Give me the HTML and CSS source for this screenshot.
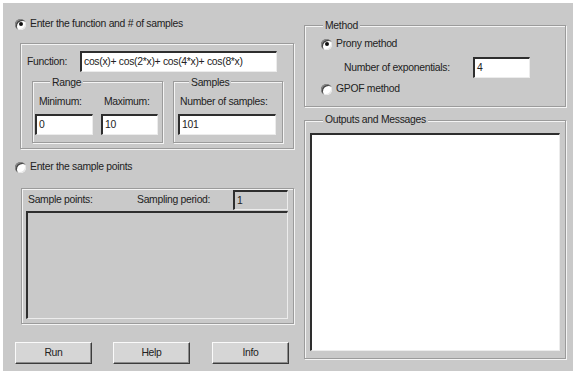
FILE: index.html
```html
<!DOCTYPE html>
<html>
<head>
<meta charset="utf-8">
<link rel="stylesheet" href="styles.css">
</head>
<body>
<div class="window">
  <div class="col-left">
    <div class="radio-row r1"><span class="radio on"></span><span>Enter the function and # of samples</span></div>
    <div class="frame f-func">
      <div class="func-row"><span class="func-label">Function:</span><span class="field func-field">cos(x)+ cos(2*x)+ cos(4*x)+ cos(8*x)</span></div>
      <div class="sub-row">
        <div class="frame range">
          <div class="title range-title">Range</div>
          <div class="range-cols">
            <div class="rcol rcol-min"><div class="lbl lbl-min">Minimum:</div><div class="field">0</div></div>
            <div class="rcol rcol-max"><div class="lbl lbl-max">Maximum:</div><div class="field">10</div></div>
          </div>
        </div>
        <div class="frame samples">
          <div class="title samples-title">Samples</div>
          <div class="lbl lbl-samples">Number of samples:</div>
          <div class="field samples-field">101</div>
        </div>
      </div>
    </div>
    <div class="radio-row r2"><span class="radio"></span><span>Enter the sample points</span></div>
    <div class="frame f-points">
      <div class="sp-row">
        <span class="sp-l1">Sample points:</span>
        <span class="sp-l2">Sampling period:</span>
        <span class="field sp-field">1</span>
      </div>
      <div class="field sp-list"></div>
    </div>
    <div class="buttons">
      <div class="btn">Run</div>
      <div class="btn">Help</div>
      <div class="btn btn-info">Info</div>
    </div>
  </div>
  <div class="col-right">
    <div class="frame method">
      <div class="title method-title">Method</div>
      <div class="radio-row m-row m-prony"><span class="radio on"></span><span>Prony method</span></div>
      <div class="num-row"><span class="num-label">Number of exponentials:</span><span class="field num-field">4</span></div>
      <div class="radio-row m-row m-gpof"><span class="radio"></span><span>GPOF method</span></div>
    </div>
    <div class="frame outputs">
      <div class="title out-title">Outputs and Messages</div>
      <div class="field out-list"></div>
    </div>
  </div>
</div>
</body>
</html>
```
FILE: styles.css
```css
* { box-sizing: border-box; }
html, body { margin: 0; padding: 0; background: #ffffff; }
body {
  font-family: "Liberation Sans", Arial, sans-serif;
  font-size: 10.4px;
  letter-spacing: -0.3px;
  color: #222222;
  line-height: 12px;
}
.window {
  margin: 3px 0 0 3px;
  width: 570px;
  height: 368px;
  background: #c9c9c9;
  display: flex;
  align-items: flex-start;
}
.col-left {
  width: 296px;
  display: flex;
  flex-direction: column;
  align-items: flex-start;
}
.col-right {
  margin-left: 5px;
  display: flex;
  flex-direction: column;
  align-items: flex-start;
}
.frame {
  border: 1px solid #9b9b9b;
  box-shadow: inset 1px 1px 0 #f4f4f4, 1px 1px 0 #f4f4f4;
  display: flex;
  flex-direction: column;
  align-items: flex-start;
}
.title {
  background: #c9c9c9;
  padding: 0 2px;
  height: 12px;
  line-height: 12px;
  white-space: nowrap;
}
.radio-row {
  display: flex;
  align-items: center;
  height: 14px;
  gap: 4px;
  white-space: nowrap;
}
.radio {
  width: 11px;
  height: 11px;
  border-radius: 50%;
  background: #ffffff;
  box-shadow: inset 1px 1px 0 #8a8a8a, inset 2px 2px 0 #444444, inset -1px -1px 0 #e6e6e6;
  display: flex;
  align-items: center;
  justify-content: center;
  flex: none;
}
.radio.on::after {
  content: "";
  width: 4px;
  height: 4px;
  border-radius: 50%;
  background: #111111;
}
.field {
  background: #ffffff;
  border-style: solid;
  border-width: 2px 1px 1px 2px;
  border-color: #2e2e2e #ececec #ececec #2e2e2e;
  height: 21px;
  display: flex;
  align-items: center;
  padding-left: 2px;
  white-space: nowrap;
}
.r1 { margin: 14px 0 0 12px; }
.f-func {
  margin: 12px 0 0 17px;
  width: 274px;
  height: 106px;
  padding: 7px 0 0 6px;
}
.func-row { display: flex; align-items: center; height: 21px; }
.func-label { width: 53px; }
.func-field { width: 197px; }
.sub-row { display: flex; margin: 9px 0 0 5px; }
.range { width: 131px; height: 62px; padding-left: 2px; }
.range-title { margin: -5px 0 0 15px; }
.range-cols { display: flex; gap: 8px; margin-top: 7px; }
.rcol { display: flex; flex-direction: column; }
.rcol-min { width: 58px; }
.rcol-max { width: 57px; }
.lbl { height: 12px; margin-bottom: 6px; white-space: nowrap; }
.lbl-min { padding-left: 4px; }
.lbl-max { padding-left: 3px; }
.samples { margin-left: 10px; width: 110px; height: 62px; padding-left: 4px; }
.samples-title { margin: -5px 0 0 11px; }
.lbl-samples { margin-top: 7px; padding-left: 2px; }
.samples-field { width: 98px; }
.r2 { margin: 11px 0 0 12px; }
.f-points {
  margin: 14px 0 0 18px;
  width: 273px;
  height: 136px;
  padding: 1px 0 0 4px;
}
.sp-row { display: flex; align-items: center; height: 20px; }
.sp-l1 { width: 111px; padding-left: 2px; }
.sp-l2 { width: 96px; }
.sp-field { width: 55px; height: 20px; background: #c9c9c9; }
.sp-list { margin-top: 1px; width: 262px; height: 108px; background: #c9c9c9; }
.buttons { display: flex; gap: 21px; margin: 18px 0 0 12px; }
.btn {
  width: 77px;
  height: 22px;
  background: #d6d6d6;
  border-style: solid;
  border-width: 1px;
  border-color: #fafafa #3c3c3c #3c3c3c #fafafa;
  box-shadow: inset -1px -1px 0 #8c8c8c;
  display: flex;
  align-items: center;
  justify-content: center;
}
.btn-info { margin-left: 1px; }
.method { margin-top: 22px; width: 262px; height: 82px; }
.method-title { margin: -6px 0 0 18px; }
.m-row { margin-left: 16px; }
.m-prony { margin-top: 5px; }
.num-row { display: flex; align-items: center; height: 21px; margin-top: 6px; }
.num-label { margin-left: 39px; width: 129px; }
.num-field { width: 57px; }
.m-gpof { margin-top: 4px; }
.outputs { margin-top: 13px; width: 262px; height: 239px; }
.out-title { margin: -7px 0 0 18px; }
.out-list { margin: 7px 0 0 5px; width: 250px; height: 218px; }
```
